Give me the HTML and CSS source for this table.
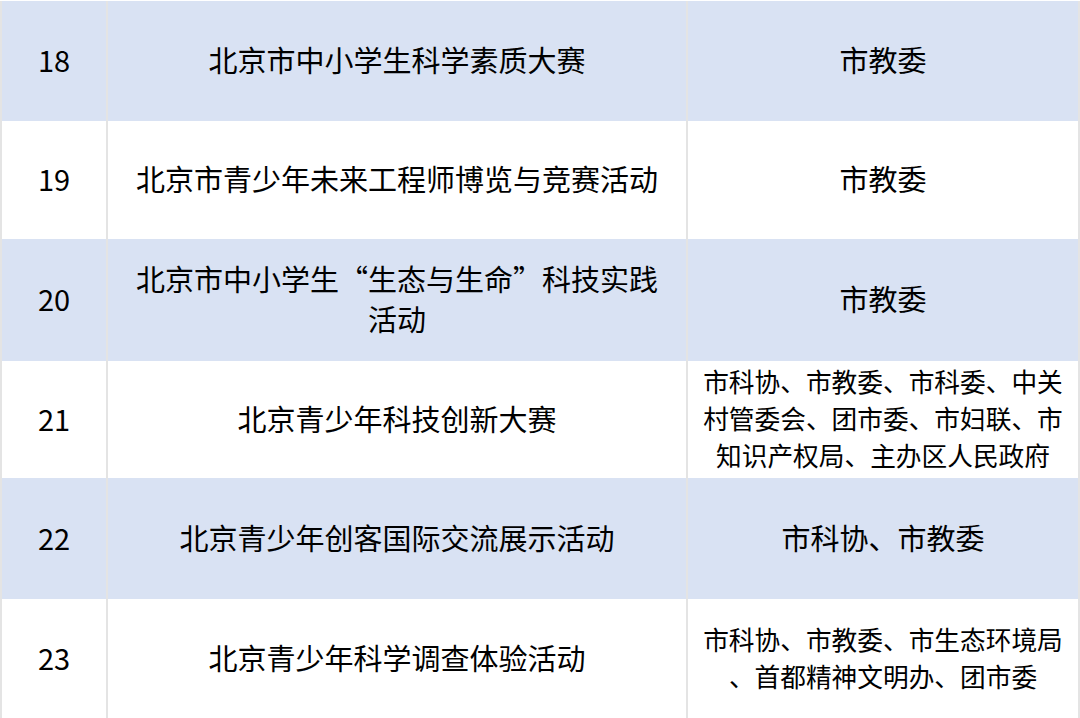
FILE: index.html
```html
<!DOCTYPE html>
<html lang="zh-CN">
<head>
<meta charset="utf-8">
<link rel="stylesheet" href="styles.css">
</head>
<body>
<div class="table">
  <div class="row blue r1">
    <div class="cell num">18</div>
    <div class="cell name">北京市中小学生科学素质大赛</div>
    <div class="cell org">市教委</div>
  </div>
  <div class="row r2">
    <div class="cell num">19</div>
    <div class="cell name">北京市青少年未来工程师博览与竞赛活动</div>
    <div class="cell org">市教委</div>
  </div>
  <div class="row blue r3">
    <div class="cell num">20</div>
    <div class="cell name">北京市中小学生“生态与生命”科技实践<br>活动</div>
    <div class="cell org">市教委</div>
  </div>
  <div class="row r4">
    <div class="cell num">21</div>
    <div class="cell name">北京青少年科技创新大赛</div>
    <div class="cell org small">市科协、市教委、市科委、中关<br>村管委会、团市委、市妇联、市<br>知识产权局、主办区人民政府</div>
  </div>
  <div class="row blue r5">
    <div class="cell num">22</div>
    <div class="cell name">北京青少年创客国际交流展示活动</div>
    <div class="cell org">市科协、市教委</div>
  </div>
  <div class="row r6">
    <div class="cell num">23</div>
    <div class="cell name">北京青少年科学调查体验活动</div>
    <div class="cell org small">市科协、市教委、市生态环境局<br>、首都精神文明办、团市委</div>
  </div>
</div>
</body>
</html>
```

FILE: styles.css
```css
html, body {
  margin: 0;
  padding: 0;
  background: #ffffff;
}
body {
  width: 1080px;
  height: 718px;
  overflow: hidden;
  font-family: "Noto Sans CJK SC", "Noto Sans", sans-serif;
  color: #000000;
}
.table {
  padding-top: 1px;
  display: flex;
  flex-direction: column;
}
.row {
  display: grid;
  grid-template-columns: 106px 580px 394px;
  height: 120px;
  background: #ffffff;
}
.row.blue {
  background: #d9e2f3;
}
.r1 { height: 120px; }
.r2 { height: 118px; }
.r3 { height: 122px; }
.r4 { height: 117px; }
.r5 { height: 121px; }
.r6 { height: 119px; }
.cell {
  display: flex;
  align-items: center;
  justify-content: center;
  text-align: center;
  border-left: 2px solid #e4e4e4;
  font-size: 29px;
  line-height: 40px;
  padding-bottom: 4px;
  box-sizing: border-box;
}
.cell.org {
  border-right: 2px solid #e4e4e4;
}
.cell.small {
  font-size: 25.7px;
  line-height: 37px;
}
```
